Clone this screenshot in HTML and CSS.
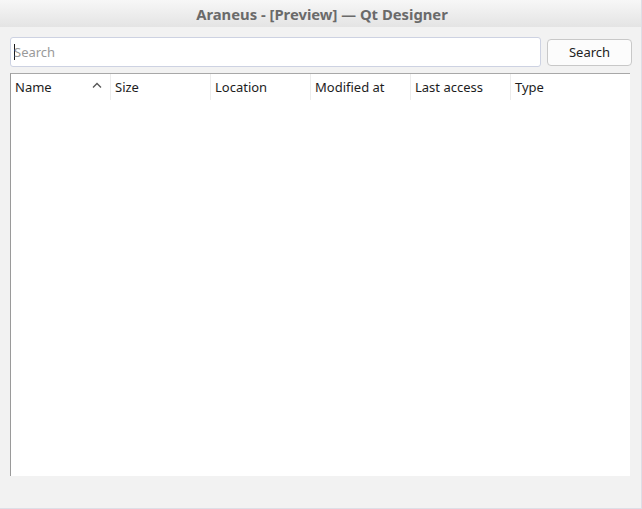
FILE: index.html
```html
<!DOCTYPE html>
<html>
<head>
<meta charset="utf-8">
<link rel="stylesheet" href="styles.css">
</head>
<body>
<div class="window">
  <div class="titlebar">Araneus - [Preview] — Qt Designer</div>
  <div class="content">
    <div class="search-row">
      <div class="search-input"><span class="caret"></span><span class="placeholder">Search</span></div>
      <div class="search-btn">Search</div>
    </div>
    <div class="tree">
      <div class="header">
        <div class="col col-name">Name<svg class="sort" width="10" height="6" viewBox="0 0 10 6"><path d="M1 5.5 L5 1.5 L9 5.5" fill="none" stroke="#555" stroke-width="1.3"/></svg></div>
        <div class="col">Size</div>
        <div class="col">Location</div>
        <div class="col">Modified at</div>
        <div class="col">Last access</div>
        <div class="col col-last">Type</div>
      </div>
    </div>
  </div>
</div>
</body>
</html>
```
FILE: styles.css
```css
* { box-sizing: border-box; }
html, body { margin: 0; padding: 0; }
body {
  font-family: "Noto Sans", "Open Sans", sans-serif;
  font-size: 13px;
  color: #1d1d1d;
}
.window {
  width: 642px;
  height: 509px;
  background: #f2f2f2;
  border-right: 1px solid #dedee6;
  border-bottom: 1px solid #dedee6;
  display: flex;
  flex-direction: column;
}
.titlebar {
  height: 27px;
  background: linear-gradient(#f7f7f7, #e4e4e4);
  color: #6a6a6a;
  font-weight: bold;
  font-size: 14.8px;
  display: flex;
  align-items: center;
  justify-content: center;
  padding-left: 3px;
}
.content {
  display: flex;
  flex-direction: column;
  padding: 10px 0 0 10px;
}
.search-row {
  display: flex;
  align-items: center;
  gap: 6px;
  height: 30px;
}
.search-input {
  width: 531px;
  height: 30px;
  background: #fff;
  border: 1px solid #cdd2e2;
  border-radius: 3px;
  display: flex;
  align-items: center;
  padding-left: 3px;
}
.caret {
  width: 1px;
  height: 16px;
  background: #1a1a1a;
}
.placeholder {
  color: #9a9a9a;
  margin-left: -1px;
}
.search-btn {
  width: 85px;
  height: 27px;
  background: #fcfcfc;
  border: 1px solid #c8c8c8;
  border-radius: 4px;
  display: flex;
  align-items: center;
  justify-content: center;
  color: #222;
}
.tree {
  margin-top: 6px;
  width: 620px;
  height: 403px;
  background: #fff;
  border-top: 1px solid #a8a8a8;
  border-left: 1px solid #9a9a9a;
}
.header {
  display: flex;
  height: 27px;
}
.col {
  width: 100px;
  height: 26px;
  padding-left: 4px;
  display: flex;
  align-items: center;
  border-right: 1px solid #ececec;
  position: relative;
}
.col-last { flex: 1; border-right: none; }
.sort {
  position: absolute;
  left: 81px;
  top: 8px;
}
```
